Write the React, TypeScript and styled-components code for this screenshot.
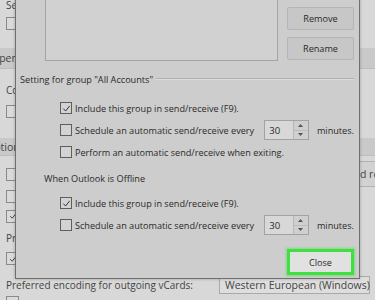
import React from 'react';
import styled, { createGlobalStyle } from 'styled-components';

const GlobalStyle = createGlobalStyle`
  html, body {
    margin: 0;
    padding: 0;
  }
  body {
    width: 375px;
    height: 300px;
    overflow: hidden;
    background: #d8d8d8;
    font-family: "Open Sans", "Noto Sans", "Liberation Sans", sans-serif;
  }
`;

const Screen = styled.div`
  position: relative;
  width: 375px;
  height: 300px;
  overflow: hidden;
  background: #d8d8d8;
`;

/* ---------- options window behind the dialog ---------- */

const Backdrop = styled.div`
  display: flex;
  flex-direction: column;
  margin-top: -2px;
  color: #444;
  font-size: 10px;
`;

const BackRow = styled.div<{ $mt: number; $h: number }>`
  display: flex;
  align-items: center;
  height: ${(p) => p.$h}px;
  margin-top: ${(p) => p.$mt}px;
  padding-left: 6px;
  white-space: nowrap;
`;

const Band = styled.div<{ $mt: number; $h: number }>`
  display: flex;
  align-items: center;
  height: ${(p) => p.$h}px;
  margin-top: ${(p) => p.$mt}px;
  background: #c9c9c9;
  border-bottom: 1px solid #bdbdbd;
  font-size: 10.5px;
  white-space: nowrap;
`;

const BandTitle = styled.span<{ $shift: number }>`
  margin-left: ${(p) => p.$shift}px;
`;

const BackBox = styled.span`
  display: inline-flex;
  align-items: center;
  justify-content: center;
  width: 11px;
  height: 11px;
  border: 1px solid #8a8a8a;
  background: #dadada;
`;

const BackButton = styled.span`
  margin-left: auto;
  margin-right: -40px;
  height: 24px;
  padding: 0 10px;
  display: flex;
  align-items: center;
  border: 1px solid #b2b2b2;
  background: #d2d2d2;
  font-size: 10.5px;
`;

const SelectBox = styled.span`
  margin-left: auto;
  margin-right: 5px;
  width: 144px;
  height: 16px;
  display: flex;
  align-items: center;
  padding-left: 5px;
  border: 1px solid #a9a9a9;
  background: #dedede;
  font-size: 10.5px;
`;

/* ---------- dialog ---------- */

const Dialog = styled.div`
  position: absolute;
  left: 15px;
  top: -31px;
  width: 345px;
  height: 310px;
  display: flex;
  flex-direction: column;
  padding: 8px 5px 0 4px;
  box-sizing: border-box;
  background: #cdcdcd;
  border: 1px solid #6f6f6f;
  border-top: none;
  box-shadow: 0 0 3px rgba(0, 0, 0, 0.25);
  color: #2a2a2a;
  font-size: 9.15px;
`;

const TopRow = styled.div`
  display: flex;
  gap: 9px;
  margin-left: 25px;
`;

const ListBox = styled.div`
  width: 233px;
  height: 84px;
  box-sizing: border-box;
  background: #d1d1d1;
  border: 1px solid #a4a4a4;
`;

const ButtonColumn = styled.div`
  display: flex;
  flex-direction: column;
  gap: 7px;
`;

const Button = styled.div`
  width: 67px;
  height: 23px;
  box-sizing: border-box;
  display: flex;
  align-items: center;
  justify-content: center;
  background: #c7c7c7;
  border: 1px solid #b5b5b5;
  border-radius: 2px;
`;

const GroupHeader = styled.div`
  display: flex;
  align-items: center;
  gap: 3px;
  height: 14px;
  margin-top: 11px;
  white-space: nowrap;

  &::after {
    content: '';
    flex: 1;
    height: 0;
    border-top: 1px solid #b0b0b0;
    border-bottom: 1px solid #dcdcdc;
  }
`;

const SubHeader = styled.div<{ $mt: number }>`
  height: 14px;
  display: flex;
  align-items: center;
  margin-top: ${(p) => p.$mt}px;
  margin-left: 24px;
`;

const Options = styled.div<{ $mt: number }>`
  display: flex;
  flex-direction: column;
  margin-top: ${(p) => p.$mt}px;
  margin-left: 40px;
`;

const OptionRow = styled.div`
  display: flex;
  align-items: center;
  height: 22px;
  white-space: nowrap;
`;

const CheckBox = styled.span`
  flex: none;
  width: 12px;
  height: 12px;
  box-sizing: border-box;
  display: inline-flex;
  align-items: center;
  justify-content: center;
  margin-right: 3px;
  background: #d3d3d3;
  border: 1px solid #5e5e5e;
`;

const Spinner = styled.div`
  display: flex;
  width: 48px;
  height: 20px;
  box-sizing: border-box;
  margin-left: 10px;
  border: 1px solid #a2a2a2;
  background: #d8d8d8;
`;

const SpinValue = styled.span`
  flex: 1;
  display: flex;
  align-items: center;
  padding-left: 4px;
  font-size: 9.6px;
`;

const SpinArrows = styled.span`
  width: 14px;
  display: flex;
  flex-direction: column;
  border-left: 1px solid #b7b7b7;
  background: #cfcfcf;
`;

const SpinHalf = styled.span`
  flex: 1;
  display: flex;
  align-items: center;
  justify-content: center;
  & + & {
    border-top: 1px solid #bcbcbc;
  }
`;

const Unit = styled.span`
  margin-left: 8px;
`;

const Footer = styled.div`
  display: flex;
  justify-content: flex-end;
  margin-top: 13px;
`;

const CloseButton = styled.div`
  width: 67px;
  height: 26px;
  box-sizing: border-box;
  display: flex;
  align-items: center;
  justify-content: center;
  background: #e1e1e1;
  border: 3px solid #3fe13f;
  box-shadow: 0 0 2px 1px rgba(60, 220, 60, 0.45);
  color: #2a2a2a;
`;

const Tick = ({ size = 9 }: { size?: number }) => (
  <svg width={size} height={size} viewBox="0 0 10 10" fill="none">
    <path d="M1.5 5.2 L4 7.8 L8.6 2" stroke="#333" strokeWidth="1.1" />
  </svg>
);

const Arrow = ({ up }: { up?: boolean }) => (
  <svg width="5" height="3" viewBox="0 0 5 3">
    <path d={up ? 'M0 3 L2.5 0 L5 3 Z' : 'M0 0 L2.5 3 L5 0 Z'} fill="#555" />
  </svg>
);

const Check = ({ checked, label }: { checked?: boolean; label: string }) => (
  <OptionRow>
    <CheckBox>{checked && <Tick />}</CheckBox>
    {label}
  </OptionRow>
);

const ScheduleRow = () => (
  <OptionRow>
    <CheckBox />
    Schedule an automatic send/receive every
    <Spinner>
      <SpinValue>30</SpinValue>
      <SpinArrows>
        <SpinHalf>
          <Arrow up />
        </SpinHalf>
        <SpinHalf>
          <Arrow />
        </SpinHalf>
      </SpinArrows>
    </Spinner>
    <Unit>minutes.</Unit>
  </OptionRow>
);

export default function App() {
  return (
    <Screen>
      <GlobalStyle />
      <Backdrop>
        <BackRow $mt={0} $h={14}>Send immediately when connected</BackRow>
        <BackRow $mt={5} $h={13}>
          <BackBox />
        </BackRow>
        <Band $mt={18} $h={20}>
          <BandTitle $shift={-9}>Open</BandTitle>
        </Band>
        <BackRow $mt={14} $h={14}>Connection</BackRow>
        <BackRow $mt={8} $h={13}>
          <BackBox />
        </BackRow>
        <Band $mt={20} $h={17}>
          <BandTitle $shift={-14}>Options</BandTitle>
        </Band>
        <BackRow $mt={12} $h={12}>
          <BackBox />
          <BackButton>Send and receive</BackButton>
        </BackRow>
        <BackRow $mt={10} $h={12}>
          <BackBox />
        </BackRow>
        <BackRow $mt={8} $h={12}>
          <BackBox>
            <Tick size={8} />
          </BackBox>
        </BackRow>
        <BackRow $mt={9} $h={14}>Preferred encoding for outgoing messages:</BackRow>
        <BackRow $mt={7} $h={13}>
          <BackBox>
            <Tick size={8} />
          </BackBox>
        </BackRow>
        <BackRow $mt={11} $h={17}>
          Preferred encoding for outgoing vCards:
          <SelectBox>Western European (Windows)</SelectBox>
        </BackRow>
        <BackRow $mt={3} $h={13}>
          <BackBox />
        </BackRow>
      </Backdrop>

      <Dialog>
        <TopRow>
          <ListBox />
          <ButtonColumn>
            <Button>Edit...</Button>
            <Button>Remove</Button>
            <Button>Rename</Button>
          </ButtonColumn>
        </TopRow>

        <GroupHeader>Setting for group "All Accounts"</GroupHeader>

        <Options $mt={11}>
          <Check checked label="Include this group in send/receive (F9)." />
          <ScheduleRow />
          <Check label="Perform an automatic send/receive when exiting." />
        </Options>

        <SubHeader $mt={8}>When Outlook is Offline</SubHeader>

        <Options $mt={7}>
          <Check checked label="Include this group in send/receive (F9)." />
          <ScheduleRow />
        </Options>

        <Footer>
          <CloseButton>Close</CloseButton>
        </Footer>
      </Dialog>
    </Screen>
  );
}
